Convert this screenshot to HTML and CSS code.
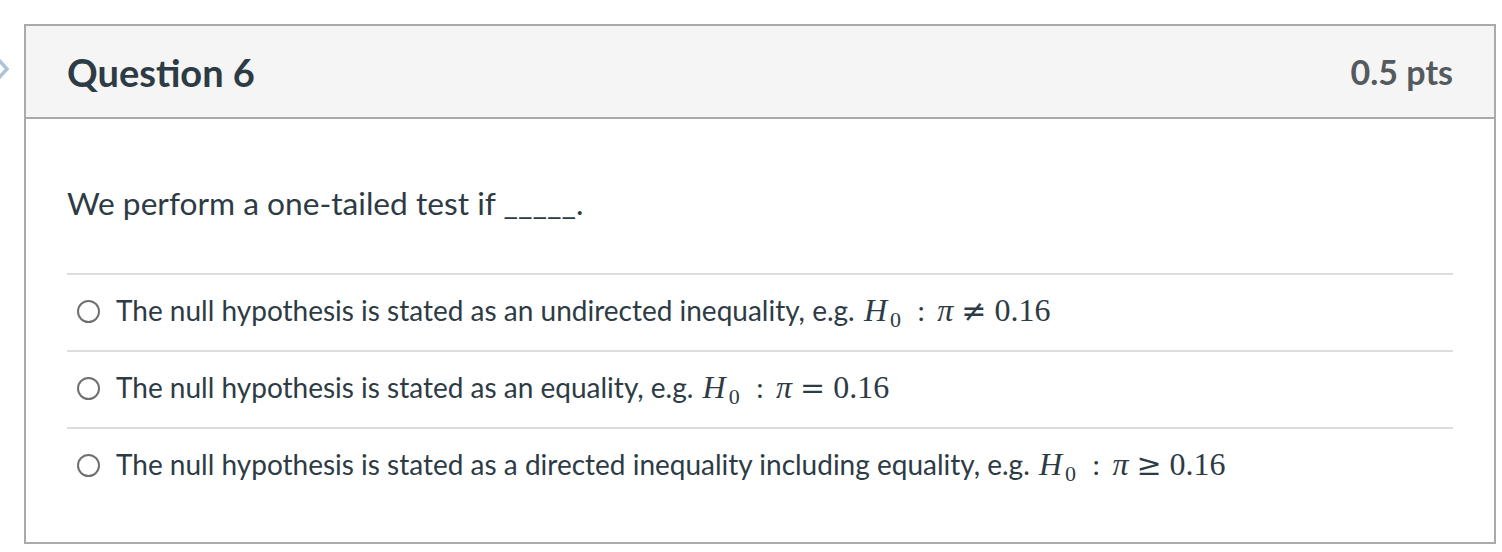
FILE: index.html
```html
<!DOCTYPE html>
<html lang="en">
<head>
<meta charset="utf-8">
<title>Question 6</title>
<link rel="stylesheet" href="styles.css">
</head>
<body>
<div class="page">
  <svg class="nav-arrow" width="10" height="28" viewBox="0 0 10 28" aria-hidden="true">
    <polyline points="-4,2 7,14 -4,26" fill="none" stroke="#adc3d8" stroke-width="3.5"/>
  </svg>
  <div class="question">
    <div class="q-header">
      <h2 class="q-title">Question 6</h2>
      <div class="q-points">0.5 pts</div>
    </div>
    <div class="q-body">
      <p class="q-text">We perform a one-tailed test if _____.</p>
      <ul class="answers">
        <li class="answer"><span class="radio"></span><span class="label">The null hypothesis is stated as an undirected inequality, e.g. <span class="math"><i>H</i><sub>0</sub><span class="rel colon">:</span><i>π</i><span class="rel">≠</span>0.16</span></span></li>
        <li class="answer"><span class="radio"></span><span class="label">The null hypothesis is stated as an equality, e.g. <span class="math"><i>H</i><sub>0</sub><span class="rel colon">:</span><i>π</i><span class="rel">=</span>0.16</span></span></li>
        <li class="answer"><span class="radio"></span><span class="label">The null hypothesis is stated as a directed inequality including equality, e.g. <span class="math"><i>H</i><sub>0</sub><span class="rel colon">:</span><i>π</i><span class="rel">≥</span>0.16</span></span></li>
      </ul>
    </div>
  </div>
</div>
</body>
</html>
```
FILE: styles.css
```css
* { box-sizing: border-box; }
html, body { margin: 0; padding: 0; background: #fff; }
body {
  font-family: Lato, "Open Sans", "Liberation Sans", sans-serif;
  color: #2d3b45;
}
.page {
  position: relative;
  padding: 24px 6px 8px 24px;
}
.nav-arrow {
  position: absolute;
  left: 0;
  top: 55px;
}
.question {
  border: 2px solid #aaaaaa;
  height: 520px;
  background: #fff;
}
.q-header {
  display: flex;
  align-items: center;
  justify-content: space-between;
  height: 93px;
  padding: 0 41px;
  background: #f5f5f5;
  border-bottom: 2px solid #aaaaaa;
}
.q-title {
  margin: 0;
  font-size: 38px;
  font-weight: 700;
  color: #2d3b45;
}
.q-points {
  font-size: 34px;
  font-weight: 700;
  color: #555a5e;
}
.q-body {
  padding: 0 41px;
}
.q-text {
  margin: 0;
  padding-top: 64px;
  height: 154px;
  font-size: 31.7px;
  line-height: 40px;
}
.answers {
  list-style: none;
  margin: 0;
  padding: 0;
}
.answer {
  display: flex;
  align-items: center;
  height: 77px;
  padding-bottom: 4px;
  border-top: 2px solid #dddddd;
  font-size: 28px;
}
.radio {
  flex: none;
  width: 23px;
  height: 23px;
  margin: 2px 16px 0 10px;
  border: 2px solid #707070;
  border-radius: 50%;
  background: #fff;
}
.math {
  font-family: "Liberation Serif", "DejaVu Serif", serif;
  font-size: 32px;
  margin-left: 2px;
}
.math i { font-style: italic; }
.math sub {
  font-size: 22px;
  vertical-align: -6px;
  line-height: 0;
  margin-left: 3px;
}
.math .rel {
  font-family: "DejaVu Serif", serif;
  font-size: 30px;
  margin: 0 8px;
}
.math .rel.colon {
  font-family: "Liberation Serif", serif;
  margin: 0 12px 0 16px;
}
```
